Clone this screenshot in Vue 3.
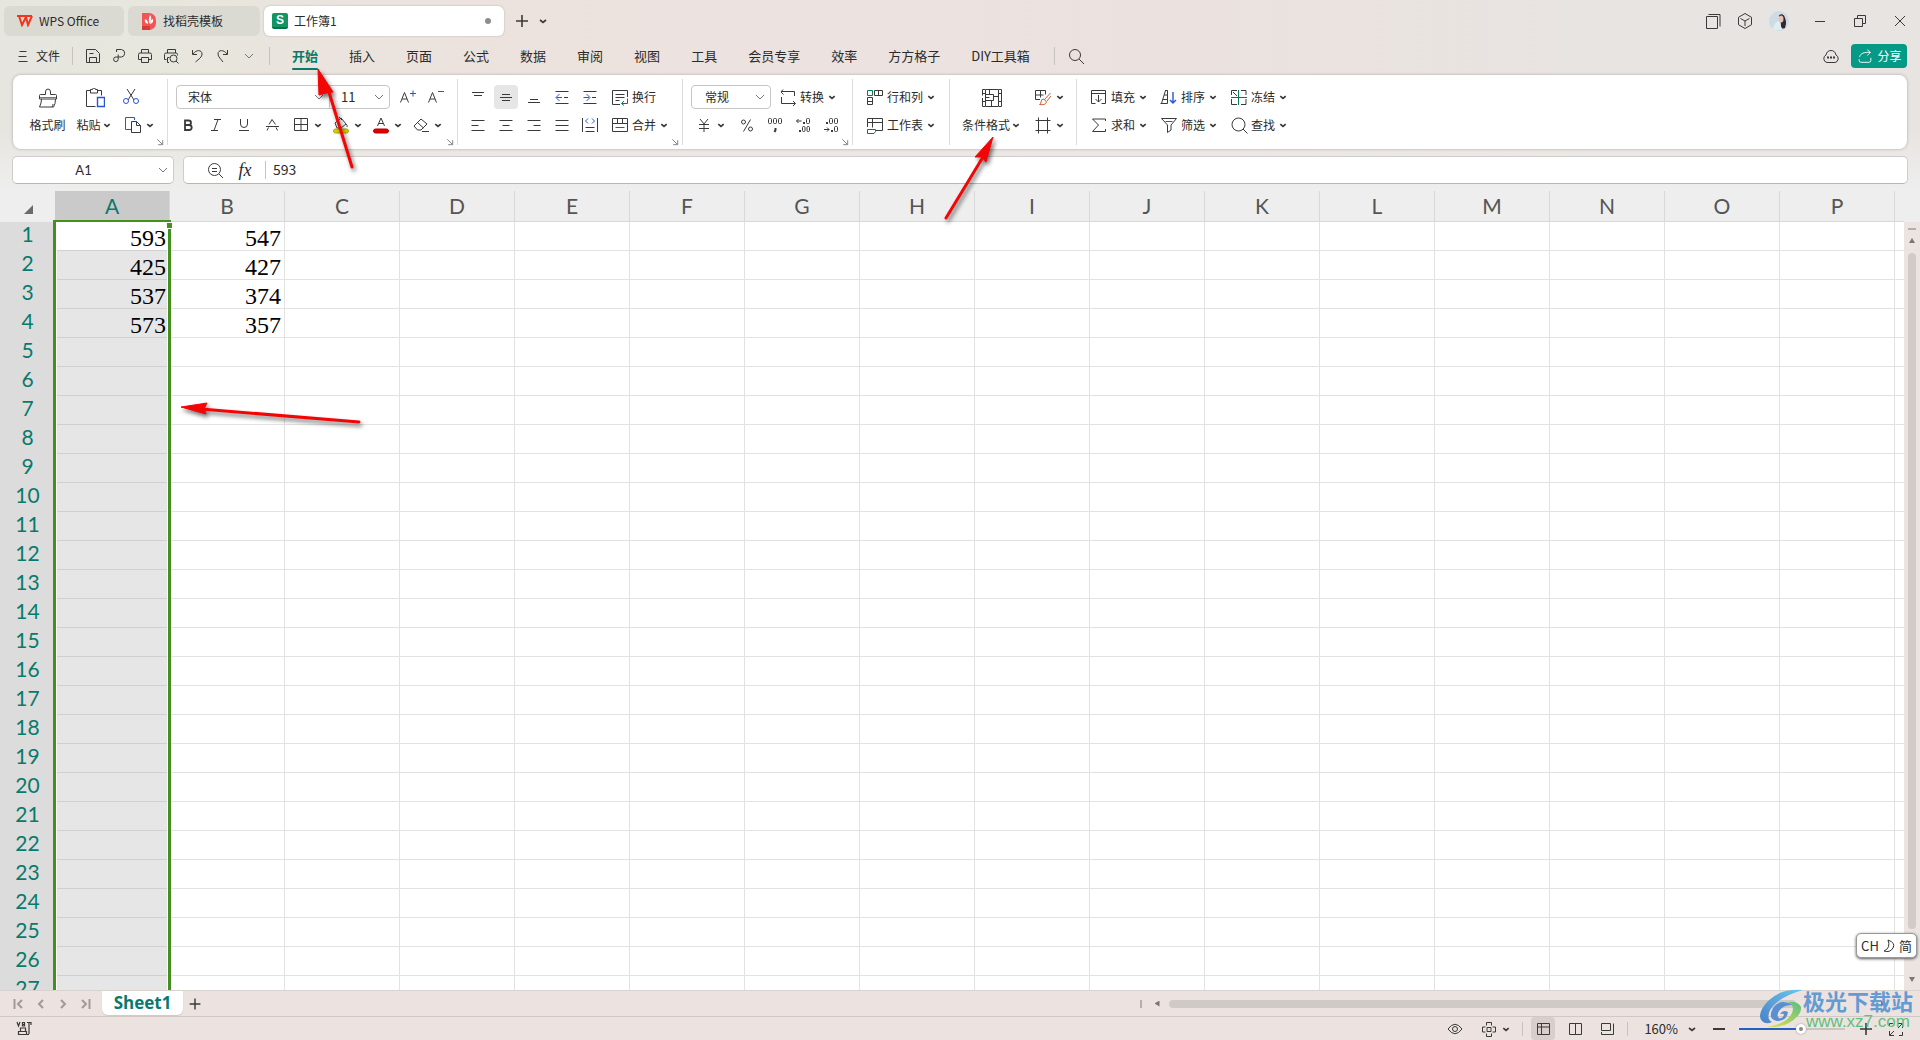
<script setup>
import { h, ref } from 'vue'

const B = '#2456d6'
const G = '#067a50'
const O = '#d0602a'
const icons = {
  plus: '<path d="M10 4v12M4 10h12" stroke-width="1.6"/>',
  chev: '<path d="M7 9l3 2.500 3-2.500" stroke-width="1.7"/>',
  drop: '<path d="M5.500 8.500l4.500 4 4.500-4" stroke-width="2.800"/>',
  chevThin: '<path d="M6 8l4 4 4-4" stroke="#777"/>',
  menu: '<path d="M6.500 5.500h7M5.500 10.500h8M5.500 15.500h9"/>',
  save: '<path d="M3.500 16.500v-13h9l4 4v9zM6.500 7.500h4M6.500 16v-4.500h7v4.500"/>',
  share: '<path d="M7.500 6V3.500h5a3.800 3.800 0 0 1 0 7.500H7a2.300 2.300 0 1 0 2.200 2.300V8.500"/>',
  print: '<path d="M6.500 7V3.500h7V7M6 13.500H3.500V8.500q0-1.500 1.500-1.500h10q1.500 0 1.500 1.500v5H14M6.500 11.500h7v5h-7z"/>',
  preview: '<path d="M6.500 7V3.500h8V7M5.500 13.500h-2V8.500q0-1.500 1.500-1.500h10q1.500 0 1.500 1.500v1M8 16.500H6.500v-5h2"/><circle cx="12.500" cy="12.500" r="3.500"/><path d="M15 15l2.500 2.500"/>',
  undo: '<path d="M5.500 4v4.500h4.500M6 8c3-4.500 9-4.500 9 0 0 3-3 5-6.500 8"/>',
  redo: '<path d="M14.500 4v4.500H10M14 8c-3-4.500-9-4.500-9 0 0 3 3 5 5 8"/>',
  search: '<circle cx="9" cy="9" r="5.500"/><path d="M13 13l5 5"/>',
  find: '<circle cx="9.500" cy="9.500" r="6.500"/><path d="M14 14l4.500 4.500"/>',
  box: '<path d="M3.500 5.500h11v12h-11zM5.500 3.500h11.500v12"/>',
  cube: '<path d="M10 2.500l6.500 3.800v7.400L10 17.500l-6.500-3.800V6.300zM5.500 7.500L10 10l4.500-2.500M10 10v5"/>',
  min: '<path d="M5 10.500h10"/>',
  restore: '<path d="M4.500 7.500h8v8h-8zM7.500 7V4.500h8v8H13"/>',
  close: '<path d="M5 5l10 10M15 5L5 15"/>',
  cloud: '<path d="M6 16.500a4 4 0 0 1-1-7.500c.500-3 2.500-4.500 5-4.500s4.500 1.500 5 4.500a4 4 0 0 1-1 7.500z"/><path d="M6 11.500h2M9 11.500h2M12 11.500h2" stroke-width="2"/>',
  send: '<path d="M3.500 13.500v1.500q0 2 2 2h9q2 0 2-2v-3M4 11c1-4 5-5.500 12-5M12.500 3l3.500 3-3.500 3.500"/>',
  brush: '<path d="M7.500 6.500V4q0-3 2.500-3t2.500 3v2.500h5q1 0 1 1V11H1.500V7.500q0-1 1-1zM3.500 11q0 4-2 8h14q2-3 2-8M14 19q1-1.500 1-3"/><path d="M2 9.500h16" stroke="' + O + '"/>',
  paste: '<path d="M6 2.500H1.500v16h9M12 2.500h4.500v5M5.500 1.500h2q0-1.500 1.500-1.500t1.500 1.500h2v3.500h-7z"/><path d="M12.500 9.500h7v9h-7z" stroke="' + B + '" stroke-width="1.400"/>',
  cut: '<path d="M4 2l7 11M12 2L5 13"/><g stroke="' + B + '"><circle cx="3" cy="14" r="2.500"/><circle cx="13" cy="14" r="2.500"/></g>',
  copy: '<path d="M8 14.500H2.500v-12h9V5" stroke="' + B + '"/><path d="M8.500 6.500h5l4 4v7h-9zM13.500 6.500v4h4"/>',
  fontUp: '<path d="M2.500 15.500l4-10 4 10M4 12h5"/><path d="M12 6.500h6M15 3.500v6" stroke="' + B + '"/>',
  fontDown: '<path d="M2.500 15.500l4-10 4 10M4 12h5"/><path d="M12 4.500h6" stroke="' + B + '"/>',
  bold: '<path d="M7 5.500h3.500q2.500 0 2.500 2.200T10.500 10H7h4q2.700 0 2.700 2.500T11 15H7z" stroke-width="1.800"/>',
  italic: '<path d="M8 4.500h7M5 15.500h7M12 4.500l-4 11"/>',
  under: '<path d="M6.500 4v5q0 3.500 3.500 3.500T13.500 9V4M5 15.500h10"/>',
  strike: '<path d="M4 11.500h13M7 9.500l3-5 3.500 5M5 15.500l1.500-3M15.500 15.500l-1.500-3"/>',
  border: '<path d="M3.500 3.500h13v12h-13zM10 3.500v12M3.500 9.500h13"/>',
  fill: '<path d="M4 8l6-5 5 6-5 4H6zM8 2l3 3M15 9q2 2 1 3"/><rect x="2.500" y="14" width="15" height="4" rx="2" fill="#d8d400" stroke="#aaa700"/>',
  color: '<path d="M6.500 11l3.500-8 3.500 8M8 8.500h4"/><rect x="2.500" y="14" width="15" height="4" rx="2" fill="#e00000" stroke="#b40000"/>',
  eraser: '<path d="M3 11l7-7 6 5-6 6H6.500zM6.500 7.500l6 5.500M11 16.500h7"/>',
  top: '<path d="M4 5.500h12M6 8.500h8"/>',
  middle: '<path d="M4 10.500h12M6 7.500h8M6 13.500h8"/>',
  bottom: '<path d="M4 15.500h12M6 12.500h8"/>',
  outdent: '<path d="M3.500 4.500h13M3.500 16.500h13M12 10.500h4"/><path d="M10 10.500H4.500M7.500 7l-3.500 3.500L7.500 14" stroke="' + B + '"/>',
  indent: '<path d="M3.500 4.500h13M3.500 16.500h13M12 10.500h4"/><path d="M3.500 10.500H9M6.500 7l3.500 3.500L6.500 14" stroke="' + B + '"/>',
  left: '<path d="M3.500 5.500h13M3.500 10.500h7M3.500 15.500h13"/>',
  center: '<path d="M3.500 5.500h13M6.500 10.500h7M3.500 15.500h13"/>',
  right: '<path d="M3.500 5.500h13M9.500 10.500h7M3.500 15.500h13"/>',
  justify: '<path d="M3.500 5.500h13M3.500 10.500h13M3.500 15.500h13"/>',
  spread: '<path d="M2.500 3v14M17.500 3v14M5.500 12.500h9M5.500 16.500h9"/><path d="M8 3.500L5.500 6 8 8.500M12 3.500L14.500 6 12 8.500" stroke="' + B + '"/>',
  wrap: '<path d="M10 17.500H2.500v-14h15V10M5.500 7.500h9M5.500 10.500h9M5.500 13.500h4"/><path d="M17.500 11.500v5H12M14 14l-2.500 2.500L14 18.500" stroke="' + G + '"/>',
  merge: '<path d="M2.500 3.500h15v13h-15zM2.500 8.500h15M7.500 3.500v5M12.500 3.500v5"/><path d="M5.500 12.500h9" stroke="' + G + '"/>',
  convert: '<path d="M5 2.500L3 5l2.500 2.500M3 4.500h13.500V9M3.500 10v6.500H17M15 14l2.500 2.500L15 19"/>',
  yen: '<path d="M6 4l4 5 4-5M10 9v8M5 9.500h10M5 13.500h10"/>',
  percent: '<circle cx="6.500" cy="7" r="2"/><circle cx="13.500" cy="14" r="2"/><path d="M13.500 4.500l-7 12"/>',
  thousand: '<rect x="3.500" y="3.500" width="3" height="5" rx="1"/><rect x="8.500" y="3.500" width="3" height="5" rx="1"/><rect x="13.500" y="3.500" width="3" height="5" rx="1"/><path d="M10.500 13v2l-1 2" stroke-width="2"/>',
  decUp: '<path d="M8.500 6H3.500M5.500 4L3.500 6l2 2"/><path d="M10 8h2M6 16h2" stroke-width="2"/><rect x="13.500" y="3.500" width="3" height="5" rx="1"/><rect x="9.500" y="11.500" width="2.500" height="5" rx="1"/><rect x="14" y="11.500" width="2.500" height="5" rx="1"/>',
  decDown: '<path d="M3 14.500h5M6 12.500l2 2-2 2"/><path d="M5 8h2M10 16h2" stroke-width="2"/><rect x="8.500" y="3.500" width="3" height="5" rx="1"/><rect x="13.500" y="3.500" width="3" height="5" rx="1"/><rect x="13.500" y="11.500" width="3" height="5" rx="1"/>',
  rowcol: '<path d="M9.500 3.500h8v5h-8zM13.500 3.500v5M2.500 10.500h5v7h-5zM2.500 14.500h5"/><path d="M2.500 3.500h5v5h-5z" stroke="' + G + '"/>',
  sheet: '<path d="M2.500 12V3.500h15v12h-7M2.500 7.500h15M7.500 3.500v9"/><path d="M2.500 14.500h8v2l-1.500 2H2.500z" stroke="' + G + '"/>',
  cond: '<path d="M3 1.500H.500v6M.500 10v8.500H3M17 1.500h2.500v17H17M3.500 1.500h13v17h-13zM.500 5.500h3M.500 13.500h3M16.500 5.500h3M16.500 13.500h3M3.500 6.500h8v6h-8M11.500 8.500h5M7.500 1.500v5M9.500 12.500v6M7.500 9.500h-4"/>',
  tstyle: '<path d="M7 12.500H2.500v-9h10v4M2.500 8h8M7.500 3.500v7"/><path d="M17.500 6l-6 6.500M18 9l-4 5M11 12q-3 0-3 3 0 2-1.500 2.500 6 1 7-2.500z" stroke="' + O + '"/>',
  frame: '<path d="M5.500 2.500v16M14.500 2.500v16M2.500 5.500h15M2.500 15.500h15"/>',
  fillDown: '<path d="M2.500 8V3.500h14V8M2.500 6.500h14M2.500 8v8.500h4M16.500 8v8.500h-4M9.500 8v7M6.500 12l3 3 3-3"/>',
  sort: '<path d="M2.500 16.500l4-13h2v13M3.500 12.500h5M6 3.500h2.500M5 8h3.500M1.500 16.500h7"/><path d="M14 5v11M11 13l3 3 3-3" stroke="' + B + '" stroke-width="1.400"/>',
  freeze: '<path d="M8 3.500H2.500V8M12 3.500h5V8M2.500 12v5.500H8M17 12v5.500h-5M4 5l4 4"/><path d="M2 10.500h16M9.500 3v15" stroke="' + G + '"/>',
  sum: '<path d="M16.500 6V4H3.500l6 6-6 6.500h13V14"/>',
  filter: '<path d="M2.500 3.500h15L12 10v5l-3.500 2.500V10z"/><path d="M6.500 6.500h7" stroke="' + G + '"/>',
  zoomOut: '<circle cx="9.500" cy="9.500" r="6"/><path d="M7 8.500h5M7 11.500h5M14 14l4 4"/>',
  launch: '<path d="M7 7l5.500 5.500M13 8v5H8" stroke="#777"/>',
  eye: '<path d="M3 10q7-9.500 14 0-7 9.500-14 0z"/><circle cx="10" cy="10" r="2.500"/>',
  cross: '<path d="M7.500 6.500v-3h5v3M7.500 14.500v3h5v-3M6.500 8H3.500v5h3M13.500 8h3v5h-3M8 8.500h4v4H8z"/>',
  normal: '<path d="M4.500 4.500h12v11h-12zM4.500 8h12M8.500 4.500v11"/>',
  page: '<path d="M4.500 4.500h12v11h-12zM10.500 4.500v11"/>',
  layout: '<path d="M4.500 4.500h9v7h-9zM4.500 13v2.500h12v-11"/>',
  full: '<path d="M12 4.500h4.500V9M16 5l-4 4M8 16.500H3.500V12M4 16l4-4M3.500 7V4.500H7M16.500 13v3.500H13"/>',
  minus: '<path d="M4 10h12" stroke-width="2"/>',
  macro: '<path d="M3 3l1.500 4L6 3M8.500 3.500h2v3.500h-2zM8.500 5.500h2M13 3.500h4v2.500M15 3.500v11.500M15 15.500H4.500v-3h8v3M6.500 12v-3h5v3" stroke-width="1.200"/>',
  first: '<path d="M5.500 5v10" stroke-width="2"/><path d="M13 6l-4 4 4 4" stroke-width="2"/>',
  prev: '<path d="M12 6l-4 4 4 4" stroke-width="2"/>',
  next: '<path d="M8 6l4 4-4 4" stroke-width="2"/>',
  last: '<path d="M14.500 5v10" stroke-width="2"/><path d="M7 6l4 4-4 4" stroke-width="2"/>'
}
const Icon = (p) => h('svg', { class: 'icon', viewBox: '0 0 20 20', width: p.s || 20, height: p.s || 20, 'aria-hidden': 'true', innerHTML: icons[p.n] })
Icon.props = ['n', 's']

const quick = [['save', '保存'], ['share', '输出'], ['print', '打印'], ['preview', '打印预览'], ['undo', '撤销'], ['redo', '恢复'], ['chevThin', '更多']]
const menus = ['开始', '插入', '页面', '公式', '数据', '审阅', '视图', '工具', '会员专享', '效率', '方方格子', 'DIY工具箱']
const fontTools = [['bold', 0], ['italic', 0], ['under', 0], ['strike', 0], ['border', 1], ['fill', 1], ['color', 1], ['eraser', 1]]
const editTools = [
  [['fillDown', '填充'], ['sort', '排序'], ['freeze', '冻结']],
  [['sum', '求和'], ['filter', '筛选'], ['find', '查找']]
]
const columns = 'ABCDEFGHIJKLMNOP'.split('')
const cells = { A1: 593, A2: 425, A3: 537, A4: 573, B1: 547, B2: 427, B3: 374, B4: 357 }
const nameBox = ref('A1')
const formula = ref('593')
const zoom = ref(50)
</script>

<template>
  <div class="app">
    <header class="title">
      <button class="tab home">
        <svg width="16" height="12" viewBox="0 0 16 12" fill="none" stroke="#f0361f" stroke-width="2"><path d="M0 1h15M2 1l3 9 4-8 2 8 4-9" /></svg>WPS Office
      </button>
      <button class="tab docer">
        <svg width="16" height="18" viewBox="0 0 16 18"><path d="M1 1h7a7 7 0 0 1 7 7v3a7 7 0 0 1-7 7H1z" fill="#f25555" /><path d="M1 14h8v4H1z" fill="#d93a3a" /><path d="M9 3q3 3-1 9-1-5 1-9zM4 7q3 1 3 5-4-1-3-5zM12 7q1 4-3 5 0-4 3-5z" fill="#fff" /></svg>找稻壳模板
      </button>
      <button class="tab book">
        <span class="slogo">S</span>工作簿1<i class="dot"></i>
      </button>
      <button class="ib" aria-label="新建"><Icon n="plus" /></button>
      <button class="cv" aria-label="标签列表"><Icon n="chev" /></button>
      <div class="window">
        <button aria-label="窗口"><Icon n="box" /></button>
        <button aria-label="应用"><Icon n="cube" /></button>
        <button aria-label="账号" class="user">
          <svg width="20" height="20" viewBox="0 0 20 20"><circle cx="10" cy="10" r="10" fill="#cfdbe4" /><path d="M10 4q5-2 6 3 2 4 0 10-5 2-4-4z" fill="#34262c" /><ellipse cx="12" cy="8" rx="2.500" ry="3.500" fill="#e6c3b4" /><path d="M4 18q1-7 6-8l3 8q-5 2-9 0z" fill="#dfeef2" /><path d="M10 5q3-3 5 0" stroke="#5a4632" fill="none" /></svg>
        </button>
        <button aria-label="最小化"><Icon n="min" /></button>
        <button aria-label="还原"><Icon n="restore" /></button>
        <button aria-label="关闭"><Icon n="close" /></button>
      </div>
    </header>

    <nav class="menu">
      <button class="file"><Icon n="menu" />文件</button>
      <i class="bar"></i>
      <div class="quick">
        <button v-for="q in quick" :key="q[0]" :aria-label="q[1]"><Icon :n="q[0]" /></button>
      </div>
      <i class="bar"></i>
      <div class="menus">
        <button v-for="(m, i) in menus" :key="m" :class="{ active: i === 0 }">{{ m }}</button>
      </div>
      <i class="bar"></i>
      <button class="ib" aria-label="搜索"><Icon n="search" /></button>
      <div class="right">
        <button class="ib" aria-label="云同步"><Icon n="cloud" /></button>
        <button class="share"><Icon n="send" s="18" />分享</button>
      </div>
    </nav>

    <section class="ribbon">
      <div class="group g1">
        <button class="big"><Icon n="brush" /><span>格式刷</span></button>
        <button class="big"><Icon n="paste" /><span>粘贴<Icon n="drop" s="12" /></span></button>
        <div class="rows">
          <div><button class="ia" aria-label="剪切"><Icon n="cut" /></button></div>
          <div><button class="ia" aria-label="复制"><Icon n="copy" /><Icon n="drop" s="12" /></button></div>
        </div>
        <Icon n="launch" s="18" class="launch" />
      </div>
      <div class="group g2">
        <div class="rows">
          <div>
            <div class="combo">
              <label class="pick wide"><select aria-label="字体"><option>宋体</option></select><Icon n="chevThin" /></label>
              <label class="pick size"><select aria-label="字号"><option>11</option></select><Icon n="chevThin" /></label>
            </div>
            <button class="ib" aria-label="增大字号"><Icon n="fontUp" /></button>
            <button class="ib" aria-label="减小字号"><Icon n="fontDown" /></button>
          </div>
          <div>
            <button v-for="t in fontTools" :key="t[0]" :class="t[1] ? 'ia' : 'ib'" :aria-label="t[0]"><Icon :n="t[0]" /><Icon v-if="t[1]" n="drop" s="12" /></button>
          </div>
        </div>
        <Icon n="launch" s="18" class="launch" />
      </div>
      <div class="group g3">
        <div class="rows">
          <div>
            <button v-for="t in ['top', 'middle', 'bottom', 'outdent', 'indent']" :key="t" class="ib" :class="{ on: t === 'middle' }" :aria-label="t"><Icon :n="t" /></button>
            <button class="it"><Icon n="wrap" />换行</button>
          </div>
          <div>
            <button v-for="t in ['left', 'center', 'right', 'justify', 'spread']" :key="t" class="ib" :aria-label="t"><Icon :n="t" /></button>
            <button class="it"><Icon n="merge" />合并<Icon n="drop" s="12" /></button>
          </div>
        </div>
        <Icon n="launch" s="18" class="launch" />
      </div>
      <div class="group g4">
        <div class="rows">
          <div>
            <div class="combo"><label class="pick num"><select aria-label="数字格式"><option>常规</option></select><Icon n="chevThin" /></label></div>
            <button class="it"><Icon n="convert" />转换<Icon n="drop" s="12" /></button>
          </div>
          <div>
            <button class="ia money" aria-label="货币"><Icon n="yen" /><Icon n="drop" s="12" /></button>
            <button v-for="t in ['percent', 'thousand', 'decUp', 'decDown']" :key="t" class="ib" :aria-label="t"><Icon :n="t" /></button>
          </div>
        </div>
        <Icon n="launch" s="18" class="launch" />
      </div>
      <div class="group g5">
        <div class="rows">
          <div><button class="it"><Icon n="rowcol" />行和列<Icon n="drop" s="12" /></button></div>
          <div><button class="it"><Icon n="sheet" />工作表<Icon n="drop" s="12" /></button></div>
        </div>
      </div>
      <div class="group g6">
        <button class="big cond"><Icon n="cond" /><span>条件格式<Icon n="drop" s="12" /></span></button>
        <div class="rows">
          <div><button class="ia" aria-label="表格样式"><Icon n="tstyle" /><Icon n="drop" s="12" /></button></div>
          <div><button class="ia" aria-label="单元格样式"><Icon n="frame" /><Icon n="drop" s="12" /></button></div>
        </div>
      </div>
      <div class="group g7">
        <div class="rows">
          <div v-for="(row, i) in editTools" :key="i" class="edit">
            <button v-for="t in row" :key="t[0]" class="it"><Icon :n="t[0]" />{{ t[1] }}<Icon n="drop" s="12" /></button>
          </div>
        </div>
      </div>
    </section>

    <section class="formula">
      <label class="name"><input v-model="nameBox" aria-label="名称框" /><Icon n="chevThin" /></label>
      <label class="fx">
        <Icon n="zoomOut" /><em>fx</em><i class="bar"></i>
        <input v-model="formula" aria-label="编辑栏" />
      </label>
    </section>

    <main class="sheet">
      <div class="view">
        <table>
          <thead>
            <tr>
              <th class="corner"><svg width="9" height="9" viewBox="0 0 9 9"><path d="M9 0v9H0z" fill="#6b6b6b" /></svg></th>
              <th v-for="c in columns" :key="c" :class="{ sel: c === 'A' }">{{ c }}</th>
              <th></th>
            </tr>
          </thead>
          <tbody>
            <tr v-for="r in 27" :key="r">
              <th>{{ r }}</th>
              <td v-for="c in columns" :key="c" :class="{ picked: c === 'A' }">{{ cells[c + r] }}</td>
              <td></td>
            </tr>
          </tbody>
        </table>
        <div class="selection"><i></i></div>
      </div>
      <div class="vscroll">
        <div class="track"><i class="dash"></i><i class="tri up"></i><i class="thumb"></i><i class="tri down"></i></div>
      </div>
    </main>

    <section class="sheets">
      <div class="nav">
        <button v-for="n in ['first', 'prev', 'next', 'last']" :key="n" :aria-label="n"><Icon :n="n" /></button>
      </div>
      <button class="current">Sheet1</button>
      <button class="add" aria-label="新建工作表"><Icon n="plus" s="18" /></button>
      <div class="hscroll"><i class="dash"></i><i class="tri back"></i><i class="thumb"></i><i class="tri fore"></i></div>
    </section>

    <footer class="status">
      <button class="macro" aria-label="宏"><Icon n="macro" /></button>
      <div class="views">
        <button class="ib" aria-label="阅读模式"><Icon n="eye" /></button>
        <button class="ia" aria-label="定位"><Icon n="cross" /><Icon n="drop" s="12" /></button>
        <i class="bar"></i>
        <button class="view-btn on" aria-label="普通视图"><Icon n="normal" /></button>
        <button class="view-btn" aria-label="分页预览"><Icon n="page" /></button>
        <button class="view-btn" aria-label="页面布局"><Icon n="layout" /></button>
        <i class="bar"></i>
        <button class="pct">160%<Icon n="chev" /></button>
        <button class="ib" aria-label="缩小"><Icon n="minus" /></button>
        <input v-model="zoom" type="range" min="0" max="100" aria-label="缩放" />
        <button class="ib" aria-label="放大"><Icon n="plus" /></button>
        <button class="full" aria-label="全屏"><Icon n="full" /></button>
      </div>
    </footer>

    <div class="ime">CH
      <svg width="12" height="14" viewBox="0 0 12 14" fill="none" stroke="#333"><path d="M5 1q8 3 5 8-3 5-9 3 7-3 4-11z" /></svg>
      简
    </div>

    <svg class="arrow a1" width="50" height="112" viewBox="0 0 50 112"><path d="M18 28L42 106" /><polygon points="8,8 9,34 16,32 23,31" /></svg>
    <svg class="arrow a2" width="64" height="96" viewBox="0 0 64 96"><path d="M46 28L9 89" /><polygon points="56,8 38,28 45,28 49,33" /></svg>
    <svg class="arrow a3" width="196" height="32" viewBox="0 0 196 32"><path d="M28 10L186 23" /><polygon points="8,8 34,4 31,10 33,15" /></svg>

    <div class="mark">
      <svg width="46" height="42" viewBox="0 0 46 42">
        <defs>
          <linearGradient id="swirlBlue" x1="0" y1="1" x2="1" y2="0"><stop offset="0" stop-color="#4a80c8" /><stop offset="1" stop-color="#6cc8ee" /></linearGradient>
          <linearGradient id="swirlGreen" x1="0" y1="1" x2="1" y2="0"><stop offset="0" stop-color="#e6e04a" /><stop offset="1" stop-color="#5cbe84" /></linearGradient>
        </defs>
        <path d="M44 1Q22-1 9 12-3 25 3 32q4 4 10 1-5-2-3-9Q14 10 44 1z" fill="url(#swirlBlue)" />
        <path d="M7 38q14 1 23-4 13-8 12-16-3-6-13-5 7 3 4 11-5 11-26 14z" fill="url(#swirlGreen)" />
        <path d="M34 16Q21 9 14 19q-6 11 4 13 10 0 11-9-5-3-8 2 4-1 4 1-2 4-5 3-3-2 0-7 5-7 14-6z" fill="#5a90d2" />
      </svg>
      <p><b>极光下载站</b><span>www.xz7.com</span></p>
    </div>
  </div>
</template>

<style>
body { overflow: hidden; }
</style>

<style scoped>
.app {
  position: relative;
  display: flex;
  flex-direction: column;
  height: 100vh;
  overflow: hidden;
  color: #2b2b2b;
  font: 12px/16px "Noto Sans CJK SC", sans-serif;
  background:
    linear-gradient(180deg, rgba(238, 238, 238, 0) 130px, #eee 190px),
    linear-gradient(90deg, #e6e5e0 0, #e7e7dd 140px, #ebe3de 380px, #ece2df 700px, #ebe2df 1200px, #e8e4e1 1600px, #e8e4e1 100%);
}
.app * { box-sizing: border-box; }
button, input, select { margin: 0; padding: 0; border: 0; background: none; color: inherit; font: inherit; outline: 0; }
button { display: flex; align-items: center; justify-content: center; white-space: nowrap; }
.icon { flex: none; display: block; fill: none; stroke: #3a3a3a; stroke-width: 1; }
.bar { width: 1px; height: 18px; background: #c8c3c0; flex: none; }
.ib { width: 28px; height: 24px; }
.ia { width: 40px; height: 24px; justify-content: flex-start; padding-left: 5px; gap: 1px; }
.it { height: 24px; padding-left: 6px; gap: 2px; }

.title { display: flex; align-items: center; height: 40px; padding: 2px 0 0 4px; }
.tab { height: 30px; border-radius: 6px; background: #dadad3; justify-content: flex-start; margin-right: 4px; padding-bottom: 1px; }
.home { width: 120px; padding-left: 13px; gap: 6px; }
.docer { width: 132px; padding-left: 13px; gap: 6px; }
.book { width: 240px; padding: 0 13px 0 8px; gap: 6px; background: #fff; box-shadow: 0 0 2px #aaa; }
.slogo { width: 16px; height: 16px; border-radius: 2px; background: #149460; border-bottom: 2px solid #0b7048; color: #fff; font: bold 12px/14px "Liberation Sans", sans-serif; }
.dot { width: 6px; height: 6px; border-radius: 3px; background: #8f8c8b; margin-left: auto; }
.title .cv { width: 14px; }
.window { margin-left: auto; display: flex; }
.window button { width: 40px; height: 30px; }
.window button:nth-child(-n+2) { width: 32px; }
.window .user { width: 36px; margin-right: 3px; }

.menu { display: flex; align-items: center; height: 31px; margin-bottom: 4px; padding: 0 13px; }
.menu > .ib { margin-left: 7px; }
.file { gap: 3px; margin-right: 12px; }
.quick { display: flex; padding: 0 7px; }
.quick button { width: 26px; height: 24px; }
.menus { display: flex; gap: 31px; margin: 0 24px 0 22px; font-size: 13px; }
.menus button { height: 28px; }
.menus .active { position: relative; color: #087a6c; font-weight: bold; }
.menus .active::after { content: ""; position: absolute; left: 0; right: 0; bottom: 0; height: 2px; background: #087a6c; border-radius: 1px; }
.right { margin-left: auto; display: flex; align-items: center; gap: 6px; }
.share { width: 56px; height: 24px; gap: 3px; border-radius: 4px; background: #059a86; color: #fff; }
.share .icon { stroke: #fff; }

.ribbon { display: flex; height: 74px; margin: 0 13px; padding-left: 1px; border-radius: 8px; background: #fff; box-shadow: 0 0 3px #a9a4a1; }
.group { position: relative; display: flex; align-items: flex-start; padding: 10px 8px 0 6px; }
.group::after { content: ""; position: absolute; right: 0; top: 4px; width: 1px; height: 66px; background: #dcdcdc; }
.g7::after { display: none; }
.g1 { padding: 10px 10px 0 10px; }
.g3, .g5 { padding-right: 13px; }
.g6 { padding-right: 9px; }
.rows { display: flex; flex-direction: column; gap: 4px; }
.rows > div { display: flex; height: 24px; }
.rows > .edit { gap: 4px; }
.big { flex-direction: column; width: 47px; height: 52px; gap: 4px; justify-content: flex-start; padding-top: 3px; }
.big span { display: flex; align-items: center; height: 24px; margin-top: 1px; }
.cond { width: 72px; }
.launch { position: absolute; right: -1px; bottom: -2px; }
.combo { display: flex; height: 24px; margin: 0 4px 0 2px; border: 1px solid #c6c6c6; border-radius: 4px; }
.pick { position: relative; display: flex; }
.pick select { appearance: none; width: 100%; height: 22px; padding-left: 11px; }
.pick .icon { position: absolute; right: 0; top: 1px; }
.wide { width: 152px; }
.wide + .size { border-left: 1px solid #c6c6c6; }
.size { width: 60px; font-size: 13px; }
.num { width: 78px; }
.pick.num select { padding-left: 13px; }
.g4 .it { padding-left: 3px; }
.money { margin-right: 4px; }
.on { background: #e6e6e6; border-radius: 4px; }
.ib.on { width: 24px; margin: 0 2px; }

.formula { display: flex; gap: 9px; margin: 7px 12px; height: 28px; }
.formula label { display: flex; align-items: center; background: #fff; border: 1px solid #cfccca; border-bottom-color: #b8b5b3; border-radius: 5px; padding-bottom: 1px; }
.name { width: 162px; }
.name input { flex: 1; min-width: 0; padding-left: 1px; text-align: center; font: 13px/16px Lato, sans-serif; }
.fx { flex: 1; padding-left: 21px; }
.fx em { width: 30px; margin: 0 5px; text-align: center; font: italic 18px/20px "Liberation Serif", serif; }
.fx input { flex: 1; padding: 0 0 1px 7px; font: 14px/18px "Noto Sans CJK SC", sans-serif; }

.sheet { flex: 1; min-height: 0; display: flex; }
.view { position: relative; flex: 1; min-width: 0; overflow: hidden; }
table { table-layout: fixed; width: 2010px; border-spacing: 0; }
th, td { width: 115px; height: 29px; padding: 0; border: solid #e2e2e2; border-width: 0 1px 1px 0; }
td { background: #fff; padding: 4px 3px 0 0; text-align: right; font: 24px/24px "Liberation Serif", serif; color: #000; }
thead th { height: 31px; background: #eee; color: #555; font: 21px/24px Lato, sans-serif; border-color: #d8d8d8; }
thead .sel { background: #cacaca; color: #087a6c; }
thead .corner { width: 55px; border: 0; padding: 2px 0 0 2px; line-height: 9px; }
tbody th { background: #dcdcdc; border: 0; color: #087a6c; font: 21px/24px Lato, sans-serif; padding: 0 0 5px; }
.picked { background: #e6e6e6; border-color: #d0d0d0; }
tbody tr:first-child .picked { background: #fff; }
.selection { position: absolute; left: 53px; top: 29px; bottom: 0; width: 118px; border: solid #43901f; border-width: 2px 3px 0; box-shadow: inset 1px 0 #fff, inset -1px 0 #fff; }
.selection i { position: absolute; right: -5px; top: 0; width: 7px; height: 7px; background: #43901f; border: 1px solid #fff; }
.tri { width: 6px; height: 5px; background: #777; flex: none; }
.up { clip-path: polygon(50% 0, 100% 100%, 0 100%); }
.down { clip-path: polygon(0 0, 100% 0, 50% 100%); }
.back, .fore { width: 5px; height: 6px; }
.back { clip-path: polygon(100% 0, 100% 100%, 0 50%); }
.fore { clip-path: polygon(0 0, 100% 50%, 0 100%); }
.vscroll { width: 16px; padding-top: 31px; background: #eee; display: flex; }
.track { flex: 1; display: flex; flex-direction: column; align-items: center; padding: 6px 0 8px; background: #ebe4e1; }
.track .dash { width: 8px; height: 2px; background: #b5afad; margin-bottom: 8px; }
.track .thumb { flex: 1; width: 8px; margin: 10px 0 48px; border-radius: 4px; background: #d2ccc9; }

.sheets { display: flex; height: 26px; border-top: 1px solid #d9d3d0; background: #ece3e0; padding-left: 9px; }
.nav { display: flex; width: 93px; gap: 2px; align-items: center; }
.nav .icon { stroke: #a09a98; }
.current { width: 81px; height: 24px; background: #fff; border-radius: 0 0 6px 6px; box-shadow: 0 1px 1px #cfc8c5; color: #087a6c; font: bold 17px/22px "Open Sans", sans-serif; }
.add { width: 24px; }
.hscroll { flex: none; width: 41%; margin-left: auto; display: flex; align-items: center; padding-right: 34px; }
.hscroll .dash { width: 2px; height: 8px; background: #b5afad; margin: 0 13px 0 3px; }
.hscroll .thumb { flex: 1; height: 8px; margin: 0 85px 0 9px; border-radius: 4px; background: #d0cac7; }
.status { display: flex; justify-content: space-between; height: 24px; border-top: 1px solid #cfc8c5; background: #ece3e0; padding: 0 8px 0 14px; }
.views { display: flex; align-items: center; }
.views button { height: 23px; }
.view-btn, .full { width: 32px; }
.views > .on { background: #d8cfcc; width: 24px; margin: 0 4px; }
.views .ia { margin: 0 4px 0 5px; }
.views .bar { height: 14px; margin: 0 4px; }
.pct { margin: 0 3px 0 12px; gap: 4px; font-size: 13px; }
.views input { appearance: none; width: 106px; height: 16px; margin: 0 7px 0 6px; background: linear-gradient(90deg, #2460c4 62px, #cbc4c1 62px) center / 100% 2px no-repeat; }
.views input::-webkit-slider-thumb { appearance: none; width: 10px; height: 10px; margin-left: 9px; border: 3px solid #fff; border-radius: 5px; background: #888; box-shadow: 0 0 2px #888; }

.ime { position: absolute; right: 3px; bottom: 82px; width: 61px; height: 25px; display: flex; align-items: center; justify-content: center; gap: 4px; border-radius: 5px; background: #fff; border: 1px solid #999; box-shadow: 0 1px 3px #555; font-size: 13px; white-space: nowrap; }
.arrow { position: absolute; fill: #f40505; stroke: #f40505; stroke-width: 1; pointer-events: none; filter: drop-shadow(2px 3px 2px rgba(0, 0, 0, .55)); }
.arrow path { stroke-width: 3; stroke-linecap: round; }
.a1 { left: 310px; top: 61px; }
.a2 { left: 937px; top: 129px; }
.a3 { left: 173px; top: 399px; }
.mark { position: absolute; right: 7px; bottom: 7px; display: flex; pointer-events: none; }
.mark p { margin: 0 0 0 -2px; display: flex; flex-direction: column; }
.mark b { color: #649bd3; font-size: 22px; line-height: 22px; }
.mark span { padding-left: 3px; color: #62bf7d; font: 17px/22px "Liberation Sans", sans-serif; }
</style>
